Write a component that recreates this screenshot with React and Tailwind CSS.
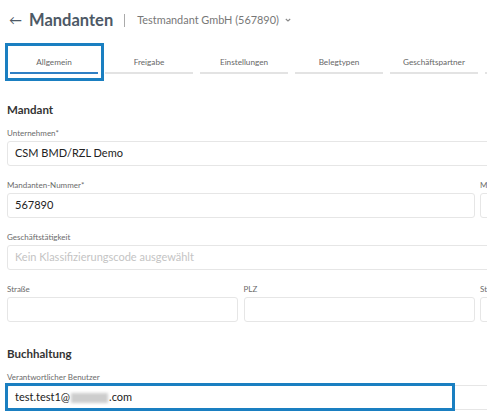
import React from "react";

const tabs = ["Allgemein", "Freigabe", "Einstellungen", "Belegtypen", "Geschäftspartner", ""];

function Label({ children }) {
  return <div className="text-[8px] text-[#6b6b6b] leading-none h-[8px] mb-[4px] whitespace-nowrap">{children}</div>;
}

function Input({ children, className = "" }) {
  return (
    <div className={"h-[25px] border border-[#e6e6e6] rounded-[3px] bg-white flex items-center px-[7px] text-[11px] text-[#222] whitespace-nowrap overflow-hidden " + className}>
      {children}
    </div>
  );
}

export default function App() {
  return (
    <div className="relative w-[487px] h-[418px] overflow-hidden bg-white" style={{ fontFamily: "Lato, 'Open Sans', sans-serif" }}>
      <div className="pl-[7px] pt-[9px]">
        {/* header */}
        <div className="flex items-center h-[22px] whitespace-nowrap">
          <span className="text-[#4d5966] text-[13px] leading-none ml-[2px] mr-[7px]">←</span>
          <span className="text-[#4d5966] text-[16.5px] font-bold leading-none">Mandanten</span>
          <span className="ml-[11px] mr-[12px] w-px h-[13px] bg-[#aaa]"></span>
          <span className="text-[#777] text-[10.9px] leading-none">Testmandant GmbH (567890)</span>
          <svg className="ml-[5px]" width="8" height="8" viewBox="0 0 8 8"><path d="M1.8 3 L4 5 L6.2 3" fill="none" stroke="#888" strokeWidth="1.1" /></svg>
        </div>

        {/* tabs */}
        <div className="flex gap-[7px] mt-[27px] ml-[3px] whitespace-nowrap">
          {tabs.map((t, i) => (
            <div key={i} className="w-[88px] shrink-0 flex flex-col items-center">
              <div className="text-[8.2px] text-[#666] leading-none h-[8px] mb-[6px]">{t}</div>
              <div className={i === 0 ? "w-full h-[2px] bg-[#2f7fc4]" : "w-full h-[2px] bg-[#e3e3e3]"}></div>
            </div>
          ))}
        </div>

        {/* Mandant */}
        <div className="text-[11.5px] font-bold text-[#333] mt-[30px] leading-none h-[12px]">Mandant</div>

        <div className="mt-[13px]">
          <Label>Unternehmen*</Label>
          <Input className="w-[520px]">CSM BMD/RZL Demo</Input>
        </div>

        <div className="grid grid-cols-[231px_231px_231px] gap-x-[5.5px] mt-[15px]">
          <div className="col-span-2">
            <Label>Mandanten-Nummer*</Label>
            <Input>567890</Input>
          </div>
          <div>
            <Label>M</Label>
            <Input></Input>
          </div>
        </div>

        <div className="mt-[15px]">
          <Label>Geschäftstätigkeit</Label>
          <Input className="w-[520px] text-[#c4c4c4] text-[8.5px]">Kein Klassifizierungscode ausgewählt</Input>
        </div>

        <div className="grid grid-cols-[231px_231px_231px] gap-x-[5.5px] mt-[15px]">
          <div>
            <Label>Straße</Label>
            <Input></Input>
          </div>
          <div>
            <Label>PLZ</Label>
            <Input></Input>
          </div>
          <div>
            <Label>St</Label>
            <Input></Input>
          </div>
        </div>

        {/* Buchhaltung */}
        <div className="text-[11.5px] font-bold text-[#333] mt-[26px] leading-none h-[12px]">Buchhaltung</div>
        <div className="mt-[13px]">
          <Label>Verantwortlicher Benutzer</Label>
          <Input className="w-[520px]">
            test.test1@
            <span className="inline-block w-[37px] h-[10px] bg-[#cdcdcd] blur-[1.5px] mx-[1px]"></span>
            .com
          </Input>
        </div>
      </div>

      {/* annotation overlays */}
      <div className="absolute left-[5px] top-[43px] w-[99px] h-[38px] border-[3px] border-[#1a7fc1]"></div>
      <div className="absolute left-[5px] top-[383px] w-[450px] h-[28px] border-[3px] border-[#1a7fc1]"></div>
    </div>
  );
}
